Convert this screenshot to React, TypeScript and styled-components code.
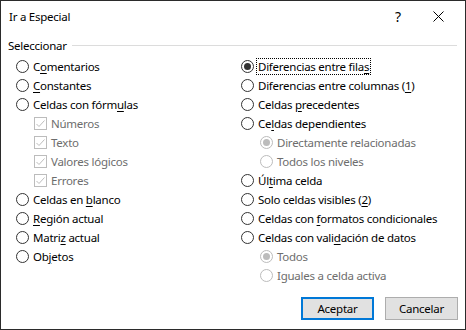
import React from "react";
import styled, { createGlobalStyle } from "styled-components";

const Global = createGlobalStyle`
  html, body { margin: 0; padding: 0; background: #fff; }
  body {
    font-family: "Noto Sans", "Open Sans", sans-serif;
    font-size: 11.5px;
    letter-spacing: -0.25px;
    color: #000;
  }
`;

const Window = styled.div`
  width: 466px;
  height: 330px;
  box-sizing: border-box;
  border: 1px solid #2b2b2b;
  background: #fff;
  display: flex;
  flex-direction: column;
`;

const TitleBar = styled.div`
  height: 30px;
  display: flex;
  align-items: center;
  padding-left: 8px;
  padding-right: 7px;
`;

const Title = styled.div`
  flex: 1;
`;

const CaptionButton = styled.div`
  width: 40px;
  height: 30px;
  display: flex;
  align-items: center;
  justify-content: center;
  font-size: 14px;
`;

const GroupHeader = styled.div`
  display: flex;
  align-items: center;
  gap: 5px;
  height: 16px;
  margin-top: 6px;
  padding: 0 8px 0 7px;

  &::after {
    content: "";
    flex: 1;
    height: 1px;
    background: #dcdcdc;
  }
`;

const Columns = styled.div`
  display: grid;
  grid-template-columns: 225px 1fr;
  margin-top: 4px;
  padding-left: 15px;
`;

const Column = styled.div`
  display: flex;
  flex-direction: column;
`;

const Row = styled.div<{ $indent?: number; $disabled?: boolean }>`
  height: 19px;
  display: flex;
  align-items: center;
  gap: 4px;
  padding-left: ${(p) => p.$indent ?? 0}px;
  color: ${(p) => (p.$disabled ? "#6d6d6d" : "#000")};
  white-space: nowrap;
`;

const Radio = styled.span<{ $checked?: boolean; $disabled?: boolean }>`
  width: 13px;
  height: 13px;
  box-sizing: border-box;
  border-radius: 50%;
  border: 1px solid ${(p) => (p.$disabled ? "#bcbcbc" : "#333")};
  background: #fff;
  display: flex;
  align-items: center;
  justify-content: center;
  flex: none;

  &::after {
    content: "";
    display: ${(p) => (p.$checked ? "block" : "none")};
    width: 7px;
    height: 7px;
    border-radius: 50%;
    background: ${(p) => (p.$disabled ? "#bcbcbc" : "#333")};
  }
`;

const Check = styled.span`
  width: 13px;
  height: 13px;
  box-sizing: border-box;
  border: 1px solid #bcbcbc;
  background: #fff;
  display: flex;
  align-items: center;
  justify-content: center;
  flex: none;
`;

const Label = styled.span<{ $focus?: boolean }>`
  padding: 0 1px;
  line-height: 15px;
  outline: ${(p) => (p.$focus ? "1px dotted #000" : "none")};
  margin-left: -1px;

  u {
    text-decoration-thickness: 1px;
    text-underline-offset: 2px;
  }
`;

const Footer = styled.div`
  margin-top: auto;
  display: flex;
  justify-content: flex-end;
  gap: 11px;
  padding: 0 7px 9px 0;
`;

const Button = styled.button<{ $default?: boolean }>`
  width: 73px;
  height: 23px;
  box-sizing: border-box;
  background: #e1e1e1;
  border: ${(p) => (p.$default ? "2px solid #0078d7" : "1px solid #adadad")};
  font-family: inherit;
  font-size: 11.5px;
  letter-spacing: -0.25px;
  color: #000;
  padding: 0;
`;

type Item = {
  text: React.ReactNode;
  kind?: "radio" | "check";
  checked?: boolean;
  disabled?: boolean;
  indent?: number;
  focus?: boolean;
};

const CheckMark = () => (
  <svg width="9" height="8" viewBox="0 0 9 8">
    <polyline points="0.5,4 3,6.5 8.5,0.5" fill="none" stroke="#bcbcbc" strokeWidth="1" />
  </svg>
);

const Option = ({ item }: { item: Item }) => (
  <Row $indent={item.indent} $disabled={item.disabled}>
    {item.kind === "check" ? (
      <Check>
        <CheckMark />
      </Check>
    ) : (
      <Radio $checked={item.checked} $disabled={item.disabled} />
    )}
    <Label $focus={item.focus}>{item.text}</Label>
  </Row>
);

const left: Item[] = [
  { text: <>C<u>o</u>mentarios</> },
  { text: <><u>C</u>onstantes</> },
  { text: <>Celdas con fórm<u>u</u>las</> },
  { text: "Números", kind: "check", disabled: true, indent: 18 },
  { text: "Texto", kind: "check", disabled: true, indent: 18 },
  { text: "Valores lógicos", kind: "check", disabled: true, indent: 18 },
  { text: "Errores", kind: "check", disabled: true, indent: 18 },
  { text: <>Celdas en <u>b</u>lanco</> },
  { text: <><u>R</u>egión actual</> },
  { text: <>Matri<u>z</u> actual</> },
  { text: <>Ob<u>j</u>etos</> },
];

const right: Item[] = [
  { text: <>Diferencias entre fila<u>s</u></>, checked: true, focus: true },
  { text: <>Diferencias entre columnas (<u>1</u>)</> },
  { text: <>Celdas <u>p</u>recedentes</> },
  { text: <>Ce<u>l</u>das dependientes</> },
  { text: "Directamente relacionadas", disabled: true, checked: true, indent: 19 },
  { text: "Todos los niveles", disabled: true, indent: 19 },
  { text: <>Úl<u>t</u>ima celda</> },
  { text: <>Solo celdas visibles (<u>2</u>)</> },
  { text: <>Celdas con <u>f</u>ormatos condicionales</> },
  { text: <>Celdas con vali<u>d</u>ación de datos</> },
  { text: "Todos", disabled: true, checked: true, indent: 19 },
  { text: "Iguales a celda activa", disabled: true, indent: 19 },
];

const CloseIcon = () => (
  <svg width="11" height="11" viewBox="0 0 11 11">
    <path d="M0.5 0.5 L10.5 10.5 M10.5 0.5 L0.5 10.5" stroke="#000" strokeWidth="1" />
  </svg>
);

export default function App() {
  return (
    <>
      <Global />
      <Window>
        <TitleBar>
          <Title>Ir a Especial</Title>
          <CaptionButton>?</CaptionButton>
          <CaptionButton>
            <CloseIcon />
          </CaptionButton>
        </TitleBar>
        <GroupHeader>Seleccionar</GroupHeader>
        <Columns>
          <Column>
            {left.map((it, i) => (
              <Option key={i} item={it} />
            ))}
          </Column>
          <Column>
            {right.map((it, i) => (
              <Option key={i} item={it} />
            ))}
          </Column>
        </Columns>
        <Footer>
          <Button $default>Aceptar</Button>
          <Button>Cancelar</Button>
        </Footer>
      </Window>
    </>
  );
}
